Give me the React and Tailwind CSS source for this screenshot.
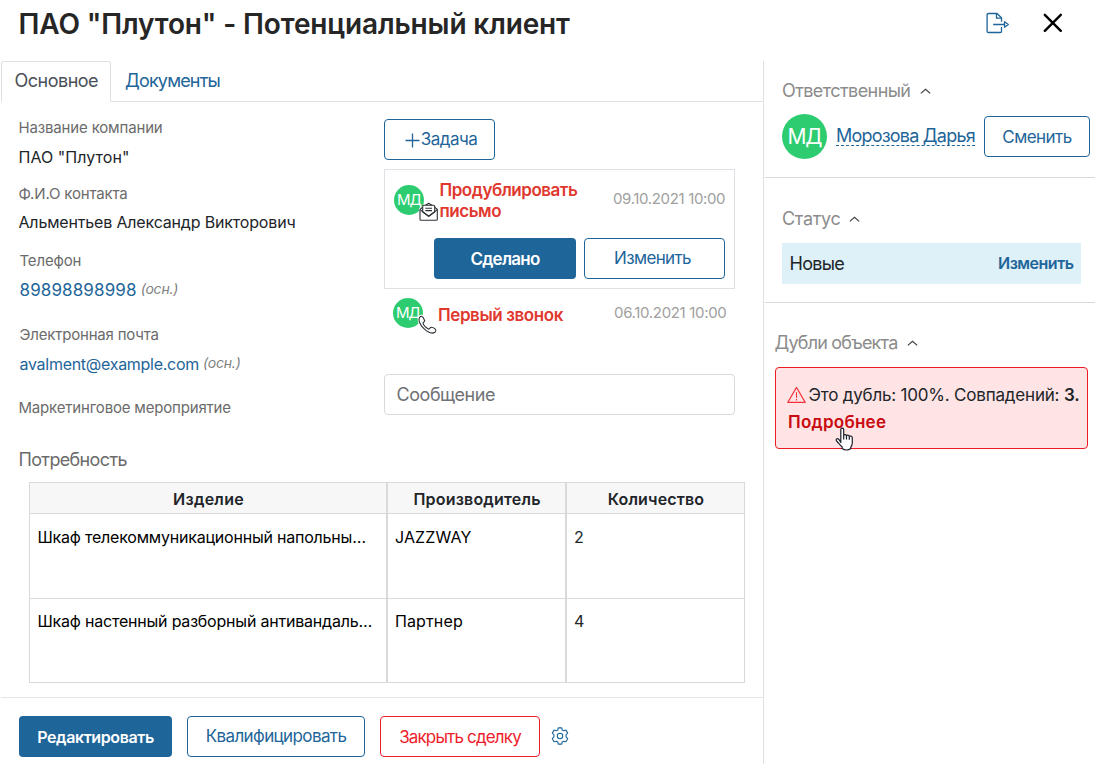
const label = "h-5 text-[15px] leading-5 whitespace-nowrap text-[#6b6b6b]";
const value = "h-5 text-[16px] leading-5 whitespace-nowrap text-[#212529]";
const outline =
  "flex h-[41px] shrink-0 items-center justify-center rounded-[4px] border border-[#1e6599] bg-white pt-px text-[17px] text-[#1e6599] whitespace-nowrap";

function Chevron() {
  return (
    <svg className="h-[6px] w-[11px] shrink-0" viewBox="0 0 11 6" fill="none" stroke="#3c3c3c" strokeWidth="1.1">
      <path d="M0.8 5.4 5.5 1.3l4.7 4.1" />
    </svg>
  );
}

function ExportIcon() {
  return (
    <svg className="h-[22px] w-6" viewBox="0 0 24 22" fill="none" stroke="#1e6599" strokeWidth="1.3" strokeLinejoin="round">
      <path d="M15.500 9.800V5.800L11 1.500H2.500C1.500 1.500 1.100 1.900 1.100 2.500V19.500C1.100 20.100 1.500 20.500 2.500 20.500H14.500C15.100 20.500 15.500 20.100 15.500 19.500V15" />
      <path d="M10.500 1.500V6.200H15.500" />
      <path d="M7.200 12.500H18.500M18.500 9.800V15.200L22.300 12.500Z" />
    </svg>
  );
}

function EnvelopeIcon() {
  return (
    <svg className="absolute left-[25px] top-[17px] h-[20px] w-[20px]" viewBox="0 0 20 20" fill="#fff" stroke="#2c3036" strokeWidth="1.100" strokeLinejoin="round">
      <path d="M1 7.200L9.600 0.800L18.300 7.200V17.200C18.300 18 17.800 18.300 17.200 18.300H2.200C1.500 18.300 1 18 1 17.200Z" stroke="#fff" strokeWidth="2.600" />
      <path d="M3.700 5.200L1 7.500V17.200C1 18 1.500 18.300 2.200 18.300H17.200C17.800 18.300 18.300 18 18.300 17.200V7.500L15.700 5.200" />
      <path d="M3.700 10V4.400C3.700 3.700 4.100 3.300 4.800 3.300H14.500C15.200 3.300 15.700 3.700 15.700 4.400V10L9.700 14.200Z" />
      <path d="M6.600 3.200L9.700 1.200L12.800 3.200M1 7.600L9.700 14.200L18.300 7.600M6.400 6.300H13M6.400 8.600H13" fill="none" />
    </svg>
  );
}

function PhoneIcon() {
  return (
    <svg className="absolute left-[24px] top-[16px] h-[21px] w-[21px]" viewBox="0 0 21 21" fill="#fff" strokeLinejoin="round">
      <path stroke="#fff" strokeWidth="3.400" d="M2.500 3.200L4.700 2.200L7.800 7L6 8.700C6.800 11.400 9.400 14.100 12.200 15L13.900 13.200L18.600 15.300L18.800 18.200C12 20.800 1 11.500 2.500 3.200Z" />
      <path stroke="#2c3036" strokeWidth="1.100" d="M2.700 3.300C3.300 2.600 4.100 2 4.800 2.300C5.600 2.600 7.300 5.600 7.700 6.700C8 7.700 6.200 8.100 6 9C6 10.900 9.800 14.900 11.800 15.100C12.800 15.100 13.200 13.200 14.200 13.300C15.200 13.400 17.900 14.600 18.500 15.300C19 16 18.700 17.600 17.900 18.200C15.700 19.700 11.500 18.800 7.500 15.200C3.500 11.600 0.700 6.200 2.700 3.300Z" />
    </svg>
  );
}

function WarningIcon() {
  return (
    <svg className="h-[17px] w-[19px] shrink-0" viewBox="0 0 19 17" fill="none" stroke="#f5323c" strokeWidth="1.100" strokeLinejoin="round">
      <path d="M9.500 0.400L18.200 15.400H0.800Z" />
      <path d="M9.500 5.300V10.800M9.500 12V13.400" />
    </svg>
  );
}

function GearIcon() {
  return (
    <svg className="h-[18px] w-[18px]" viewBox="0 0 18 18" fill="none" stroke="#1e6599" strokeWidth="1.100" strokeLinejoin="round">
      <path d="M7.300 0.900H10.700L11.200 3L12.700 3.800L14.900 3.100L16.700 6.100L15.100 7.700V9.900L16.700 11.700L14.900 14.800L12.700 14.200L11.200 15L10.700 17.100H7.300L6.800 15L5.300 14.200L3.100 14.800L1.300 11.700L2.900 9.900V7.700L1.300 6.100L3.100 3.100L5.300 3.800L6.800 3Z" />
      <circle cx="9" cy="9" r="2.700" />
    </svg>
  );
}

function HandCursor() {
  return (
    <svg className="absolute left-[59px] top-[59px] h-[25px] w-[20px]" viewBox="0 0 20 25" fill="#fff" stroke="#1b2029" strokeWidth="1.200" strokeLinejoin="round">
      <path d="M5.800 15.500V2.700C5.800 0.700 8.700 0.700 8.700 2.700V8.700C8.700 7.200 11.500 7.300 11.500 9C11.500 7.700 14.300 7.900 14.300 9.600C14.300 8.600 17.300 8.800 17.300 10.700V15.500C17.300 18 16.500 18.900 15.800 20.200V21.500C13.500 23.500 9.500 23.500 7.200 21.500V20C5.500 18.500 3.600 16 1.600 14C0.300 12.200 2.300 10.900 3.900 12.400Z" />
      <path d="M8.700 8.500V12.500M11.500 9V12.500M14.300 9.600V12.800" fill="none" />
    </svg>
  );
}

function SmallAvatar({ children }) {
  return (
    <div className="relative flex h-[30px] w-[30px] shrink-0 items-center justify-center rounded-full bg-[#2ecc71] text-[15px] tracking-[-0.900px] text-white">
      МД
      {children}
    </div>
  );
}

function TableRow({ cells, height }) {
  const border = "border-x border-b border-[#d9d9d9] text-[16px] leading-5 whitespace-nowrap";
  return (
    <div className={"grid grid-cols-[358px_179px_179px] text-black " + height}>
      <div className={border + " pl-[7.500px] tracking-[-0.210px]"}>{cells[0]}</div>
      <div className={border + " pl-[7px] tracking-[0.120px]"}>{cells[1]}</div>
      <div className={border + " pl-[7px] text-[#212529]"}>{cells[2]}</div>
    </div>
  );
}

export default function App() {
  return (
    <div className="flex h-[766px] w-[1097px] flex-col overflow-hidden bg-white font-['Inter','Liberation_Sans',sans-serif]">
      <header className="flex h-[61px] shrink-0 items-start justify-between pl-[18.500px] pr-[34.500px]">
        <h1 className="mt-[5px] text-[28px] font-semibold leading-[38px] tracking-[-0.130px] whitespace-nowrap text-[#262626]">
          ПАО "Плутон" - Потенциальный клиент
        </h1>
        <div className="flex items-start">
          <div className="mt-3 mr-[33px]"><ExportIcon /></div>
          <svg className="mt-[13px] h-5 w-5" viewBox="0 0 20 20" stroke="#000" strokeWidth="2.400" strokeLinecap="round">
            <path d="M1.800 1.800L17.800 17.800M17.800 1.800L1.800 17.800" />
          </svg>
        </div>
      </header>

      <div className="flex h-[703px] shrink-0">
        <main className="flex w-[763px] flex-col">
          <nav className="flex h-[41px] shrink-0 pl-px text-[18px] leading-[38px]">
            <div className="w-[110px] rounded-t-[3px] border border-b-0 border-[#dee2e6] pl-[12.500px] tracking-[-0.500px] text-[#495057]">Основное</div>
            <div className="flex-1 border-b border-[#dee2e6] pl-[14px] pt-px tracking-[-0.820px] text-[#1e6599]">Документы</div>
          </nav>

          <div className="flex h-[348px] shrink-0">
            <section className="w-[384px] pl-[18.500px]">
              <div className={label + " mt-4 tracking-[-0.160px]"}>Название компании</div>
              <div className={value + " mt-[9px] tracking-[0.050px]"}>ПАО "Плутон"</div>
              <div className={label + " mt-[17px] tracking-[-0.160px]"}>Ф.И.О контакта</div>
              <div className={value + " mt-[8px] tracking-[-0.170px]"}>Альментьев Александр Викторович</div>
              <div className={label + " mt-[19px] pl-px tracking-[-0.150px]"}>Телефон</div>
              <div className="mt-[9px] flex h-5 gap-[4px] pl-px leading-5 whitespace-nowrap">
                <span className="text-[17px] tracking-[0.120px] text-[#1e6599]">89898898998</span>
                <span className="text-[14px] italic leading-[18px] tracking-[-0.200px] text-[#808080]">(осн.)</span>
              </div>
              <div className={label + " mt-[25px] pl-px tracking-[-0.200px]"}>Электронная почта</div>
              <div className="mt-[9px] flex h-5 gap-[4px] pl-px leading-5 whitespace-nowrap">
                <span className="text-[16px] tracking-[-0.280px] text-[#1e6599]">avalment@example.com</span>
                <span className="text-[14px] italic leading-[18px] tracking-[-0.200px] text-[#808080]">(осн.)</span>
              </div>
              <div className={label + " mt-6 tracking-[-0.180px]"}>Маркетинговое мероприятие</div>
            </section>

            <section className="w-[351px] pt-[17px]">
              <button className={outline + " w-[111px] gap-px pl-[3px] pt-[2px] tracking-[-0.500px]"}>
                <svg className="h-[15px] w-[15px]" viewBox="0 0 15 15" stroke="#1e6599" strokeWidth="1.300"><path d="M7.500 0.500V14.500M0.500 7.500H14.500" /></svg>
                Задача
              </button>
              <div className="mt-[9px] flex h-[120px] flex-col border border-[#dee2e6] pl-[9px] pt-[9px]">
                <div className="flex h-[59px]">
                  <div className="mt-[6px]"><SmallAvatar><EnvelopeIcon /></SmallAvatar></div>
                  <div className="ml-[15.500px] mt-px w-[173.500px] text-[17px] font-semibold leading-[21px] tracking-[-0.470px] text-[#df382f]">Продублировать<br />письмо</div>
                  <div className="mt-[10px] text-[15px] leading-5 tracking-[-0.350px] whitespace-nowrap text-[#a0a0a0]">09.10.2021 10:00</div>
                </div>
                <div className="flex gap-2 pl-10">
                  <button className="h-[41px] w-[142px] rounded-[4px] bg-[#1e6599] pt-[2px] text-[17px] font-semibold tracking-[-0.750px] text-white">Сделано</button>
                  <button className={outline + " w-[141px] pr-1 pt-[2px] tracking-[-0.640px]"}>Изменить</button>
                </div>
              </div>
              <div className="flex h-[85px] pl-[9px] pt-[9px]">
                <SmallAvatar><PhoneIcon /></SmallAvatar>
                <div className="ml-[15px] mt-[7px] w-[176px] text-[17px] font-semibold leading-5 tracking-[-0.410px] text-[#df382f]">Первый звонок</div>
                <div className="mt-[5px] text-[15px] leading-5 tracking-[-0.330px] whitespace-nowrap text-[#a0a0a0]">06.10.2021 10:00</div>
              </div>
              <div className="flex h-[41px] items-center rounded-[4px] border border-[#d9d9d9] pl-[11.500px] text-[18px] tracking-[-0.450px] text-[#6f7174]">Сообщение</div>
            </section>
          </div>

          <section className="h-[247px] shrink-0">
            <h2 className="h-8 pl-[18.500px] text-[18px] leading-5 tracking-[-0.650px] text-[#6b6b6b]">Потребность</h2>
            <div className="ml-[29px] w-[716px]">
              <div className="grid h-8 grid-cols-[358px_179px_179px] text-center text-[16px] font-semibold leading-[32px] text-[#212529]">
                <div className="h-8 border border-[#d9d9d9] bg-[#f7f7f7] pl-px tracking-[0.250px]">Изделие</div>
                <div className="h-8 border border-[#d9d9d9] bg-[#f7f7f7] pl-px tracking-[0.200px]">Производитель</div>
                <div className="h-8 border border-[#d9d9d9] bg-[#f7f7f7] pl-px tracking-[0.160px]">Количество</div>
              </div>
              <TableRow height="h-[85px] *:pt-[13px]" cells={["Шкаф телекоммуникационный напольны…", "JAZZWAY", "2"]} />
              <TableRow height="h-[84px] *:pt-3" cells={["Шкаф настенный разборный антивандаль…", "Партнер", "4"]} />
            </div>
          </section>

          <footer className="ml-px flex flex-1 items-start border-t border-[#e5e5e5] pl-[18px] pt-[18px]">
            <button className="h-[41px] w-[153px] rounded-[4px] bg-[#1e6599] text-[16px] font-semibold tracking-[-0.400px] text-white">Редактировать</button>
            <button className={outline + " ml-[15px] w-[178px] pt-[2px] tracking-[-0.620px]"}>Квалифицировать</button>
            <button className="ml-[15px] h-[41px] w-[160px] rounded-[4px] border border-[#ee1c2b] pt-[2px] text-[17px] tracking-[-0.840px] text-[#ee1c2b]">Закрыть сделку</button>
            <div className="ml-[11px] mt-[11px]"><GearIcon /></div>
          </footer>
        </main>

        <aside className="w-[332px] border-l border-[#dee2e6] text-[18px] leading-5 whitespace-nowrap">
          <section className="ml-px h-[117px] w-[330px] border-b border-[#d9d9d9] pl-[17px] pt-5">
            <h3 className="flex items-center gap-[10px] tracking-[-0.580px] text-[#8c8c8c]">Ответственный<Chevron /></h3>
            <div className="mt-[13px] flex">
              <div className="flex h-[45px] w-[45px] shrink-0 items-center justify-center rounded-full bg-[#2ecc71] text-[21px] tracking-[-1.100px] text-white">МД</div>
              <div className="ml-[9px] mt-[9px] h-[23px] w-[139px] border-b border-dashed border-[#1e6599] leading-[26px] tracking-[-0.780px] text-[#1e6599]">Морозова Дарья</div>
              <button className={outline + " ml-[9px] mt-[2px] w-[106px] tracking-[-0.550px]"}>Сменить</button>
            </div>
          </section>
          <section className="ml-px h-[125px] w-[330px] border-b border-[#d9d9d9] pl-[17px] pt-[31px]">
            <h3 className="flex items-center gap-[9px] tracking-[-0.320px] text-[#8c8c8c]">Статус<Chevron /></h3>
            <div className="mt-[14px] flex h-[41px] w-[299px] items-center justify-between bg-[#def0f8] pl-[7.500px] pr-[7.500px]">
              <span className="tracking-[-0.700px] text-[#212529]">Новые</span>
              <span className="pb-px text-[16px] font-semibold tracking-[-0.500px] text-[#1e6599]">Изменить</span>
            </div>
          </section>
          <section className="pl-[10.500px] pt-[30px]">
            <h3 className="flex items-center gap-[10px] tracking-[-0.800px] text-[#8c8c8c]">Дубли объекта<Chevron /></h3>
            <div className="relative mt-[14px] h-[82px] w-[313px] rounded-[4px] border border-[#ed1c24] bg-[#fee4e4] pl-[11px] pt-[14px] text-[17px] leading-[27px]">
              <div className="flex items-center gap-[3px] text-[#212529]">
                <WarningIcon />
                <span className="tracking-[-0.200px]">Это дубль: 100%. Совпадений: <b className="font-semibold">3.</b></span>
              </div>
              <div className="pl-[1.500px] font-semibold tracking-[0.260px] text-[#c90a10]">Подробнее</div>
              <HandCursor />
            </div>
          </section>
        </aside>
      </div>
    </div>
  );
}
